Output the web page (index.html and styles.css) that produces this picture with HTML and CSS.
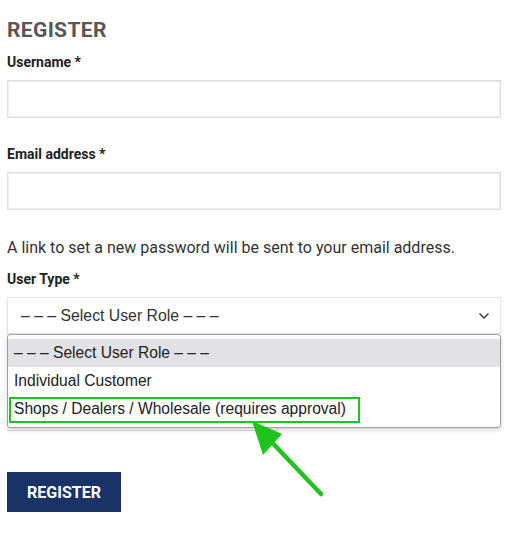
FILE: index.html
```html
<!DOCTYPE html>
<html lang="en">

<head>
    <meta charset="UTF-8">
    <meta name="viewport" content="width=device-width, initial-scale=1.0">
    <title>Register</title>
    <link rel="stylesheet" href="styles.css">
</head>

<body>
    <div class="page">
        <h2 class="title">Register</h2>

        <form class="register-form">
            <label class="field-label">Username *</label>
            <div class="text-input"></div>

            <label class="field-label email-label">Email address *</label>
            <div class="text-input"></div>

            <p class="note">A link to set a new password will be sent to your email address.</p>

            <label class="field-label type-label">User Type *</label>
            <div class="select-wrap">
                <div class="select-box">
                    <span>&ndash; &ndash; &ndash; Select User Role &ndash; &ndash; &ndash;</span>
                    <svg class="chevron" width="12" height="8" viewBox="0 0 12 8">
                        <path d="M1.5 1.5 L6 6 L10.5 1.5" fill="none" stroke="#333" stroke-width="1.4"/>
                    </svg>
                </div>
                <div class="behind-row"></div>

                <ul class="dropdown">
                    <li class="option selected">&ndash; &ndash; &ndash; Select User Role &ndash; &ndash; &ndash;</li>
                    <li class="option">Individual Customer</li>
                    <li class="option">Shops / Dealers / Wholesale (requires approval)</li>
                </ul>
                <div class="highlight-box"></div>
            </div>

            <button type="button" class="register-btn">Register</button>
        </form>

        <svg class="pointer-arrow" width="515" height="548" viewBox="0 0 515 548">
            <line x1="321" y1="494" x2="264" y2="434" stroke="#1dc41d" stroke-width="4.5" stroke-linecap="round"/>
            <polygon points="252,421 263,455 282,434" fill="#1dc41d"/>
        </svg>
    </div>
</body>

</html>
```

FILE: styles.css
```css
body {
    margin: 0;
    padding: 0;
    background: #fff;
    font-family: Roboto, "Liberation Sans", sans-serif;
    color: #333;
}

.page {
    position: relative;
    width: 515px;
    height: 548px;
    padding: 0 7px;
    box-sizing: border-box;
}

.title {
    margin: 0;
    padding-top: 18px;
    font-size: 21px;
    line-height: 24px;
    font-weight: 700;
    letter-spacing: 0.35px;
    text-transform: uppercase;
    color: #5a5653;
}

.register-form {
    width: 494px;
    margin-top: 10px;
}

.field-label {
    display: block;
    font-size: 14px;
    line-height: 20px;
    font-weight: 700;
    color: #222;
    margin-bottom: 8px;
}

.email-label {
    margin-top: 26px;
}

.text-input {
    height: 38px;
    border: 1px solid #ddd;
    box-shadow: inset 0 0 0 1px #f0f0f0;
    box-sizing: border-box;
    background: #fff;
}

.note {
    margin: 26px 0 0;
    font-size: 16px;
    line-height: 24px;
    color: #333;
}

.type-label {
    margin-top: 9px;
}

.select-wrap {
    position: relative;
}

.select-box {
    height: 37px;
    display: flex;
    align-items: center;
    justify-content: space-between;
    padding: 0 10px 0 13px;
    border: 1px solid #e6e6e6;
    box-shadow: 0 1px 4px rgba(0, 0, 0, 0.08);
    box-sizing: border-box;
    font-family: "Liberation Sans", Arial, sans-serif;
    font-size: 15.8px;
    color: #333;
}

.chevron {
    margin-top: 1px;
}

.behind-row {
    width: 271px;
    height: 97px;
    border-right: 1px solid #ddd;
    border-bottom: 1px solid #ddd;
    box-sizing: border-box;
}

.dropdown {
    position: absolute;
    top: 37px;
    left: 0;
    width: 494px;
    height: 94px;
    margin: 0;
    padding: 4px 0 0;
    list-style: none;
    background: #fff;
    border: 1px solid #a0a0a0;
    border-radius: 3px;
    box-shadow: 0 2px 4px rgba(0, 0, 0, 0.18);
    box-sizing: border-box;
    font-family: "Liberation Sans", Arial, sans-serif;
    font-size: 15.6px;
    color: #222;
}

.option {
    height: 28px;
    line-height: 28px;
    padding-left: 6px;
}

.option.selected {
    background: #e1e1e6;
}

.highlight-box {
    position: absolute;
    top: 100px;
    left: 2px;
    width: 351px;
    height: 26px;
    border: 2px solid #1ec41e;
    box-sizing: border-box;
}

.register-btn {
    display: block;
    margin-top: 41px;
    width: 114px;
    height: 40px;
    padding: 0;
    border: none;
    border-radius: 0;
    background: #1a3367;
    color: #fff;
    font-family: Roboto, "Liberation Sans", sans-serif;
    font-size: 16px;
    font-weight: 700;
    text-transform: uppercase;
    cursor: pointer;
}

.pointer-arrow {
    position: absolute;
    top: 0;
    left: 0;
    pointer-events: none;
}
```
